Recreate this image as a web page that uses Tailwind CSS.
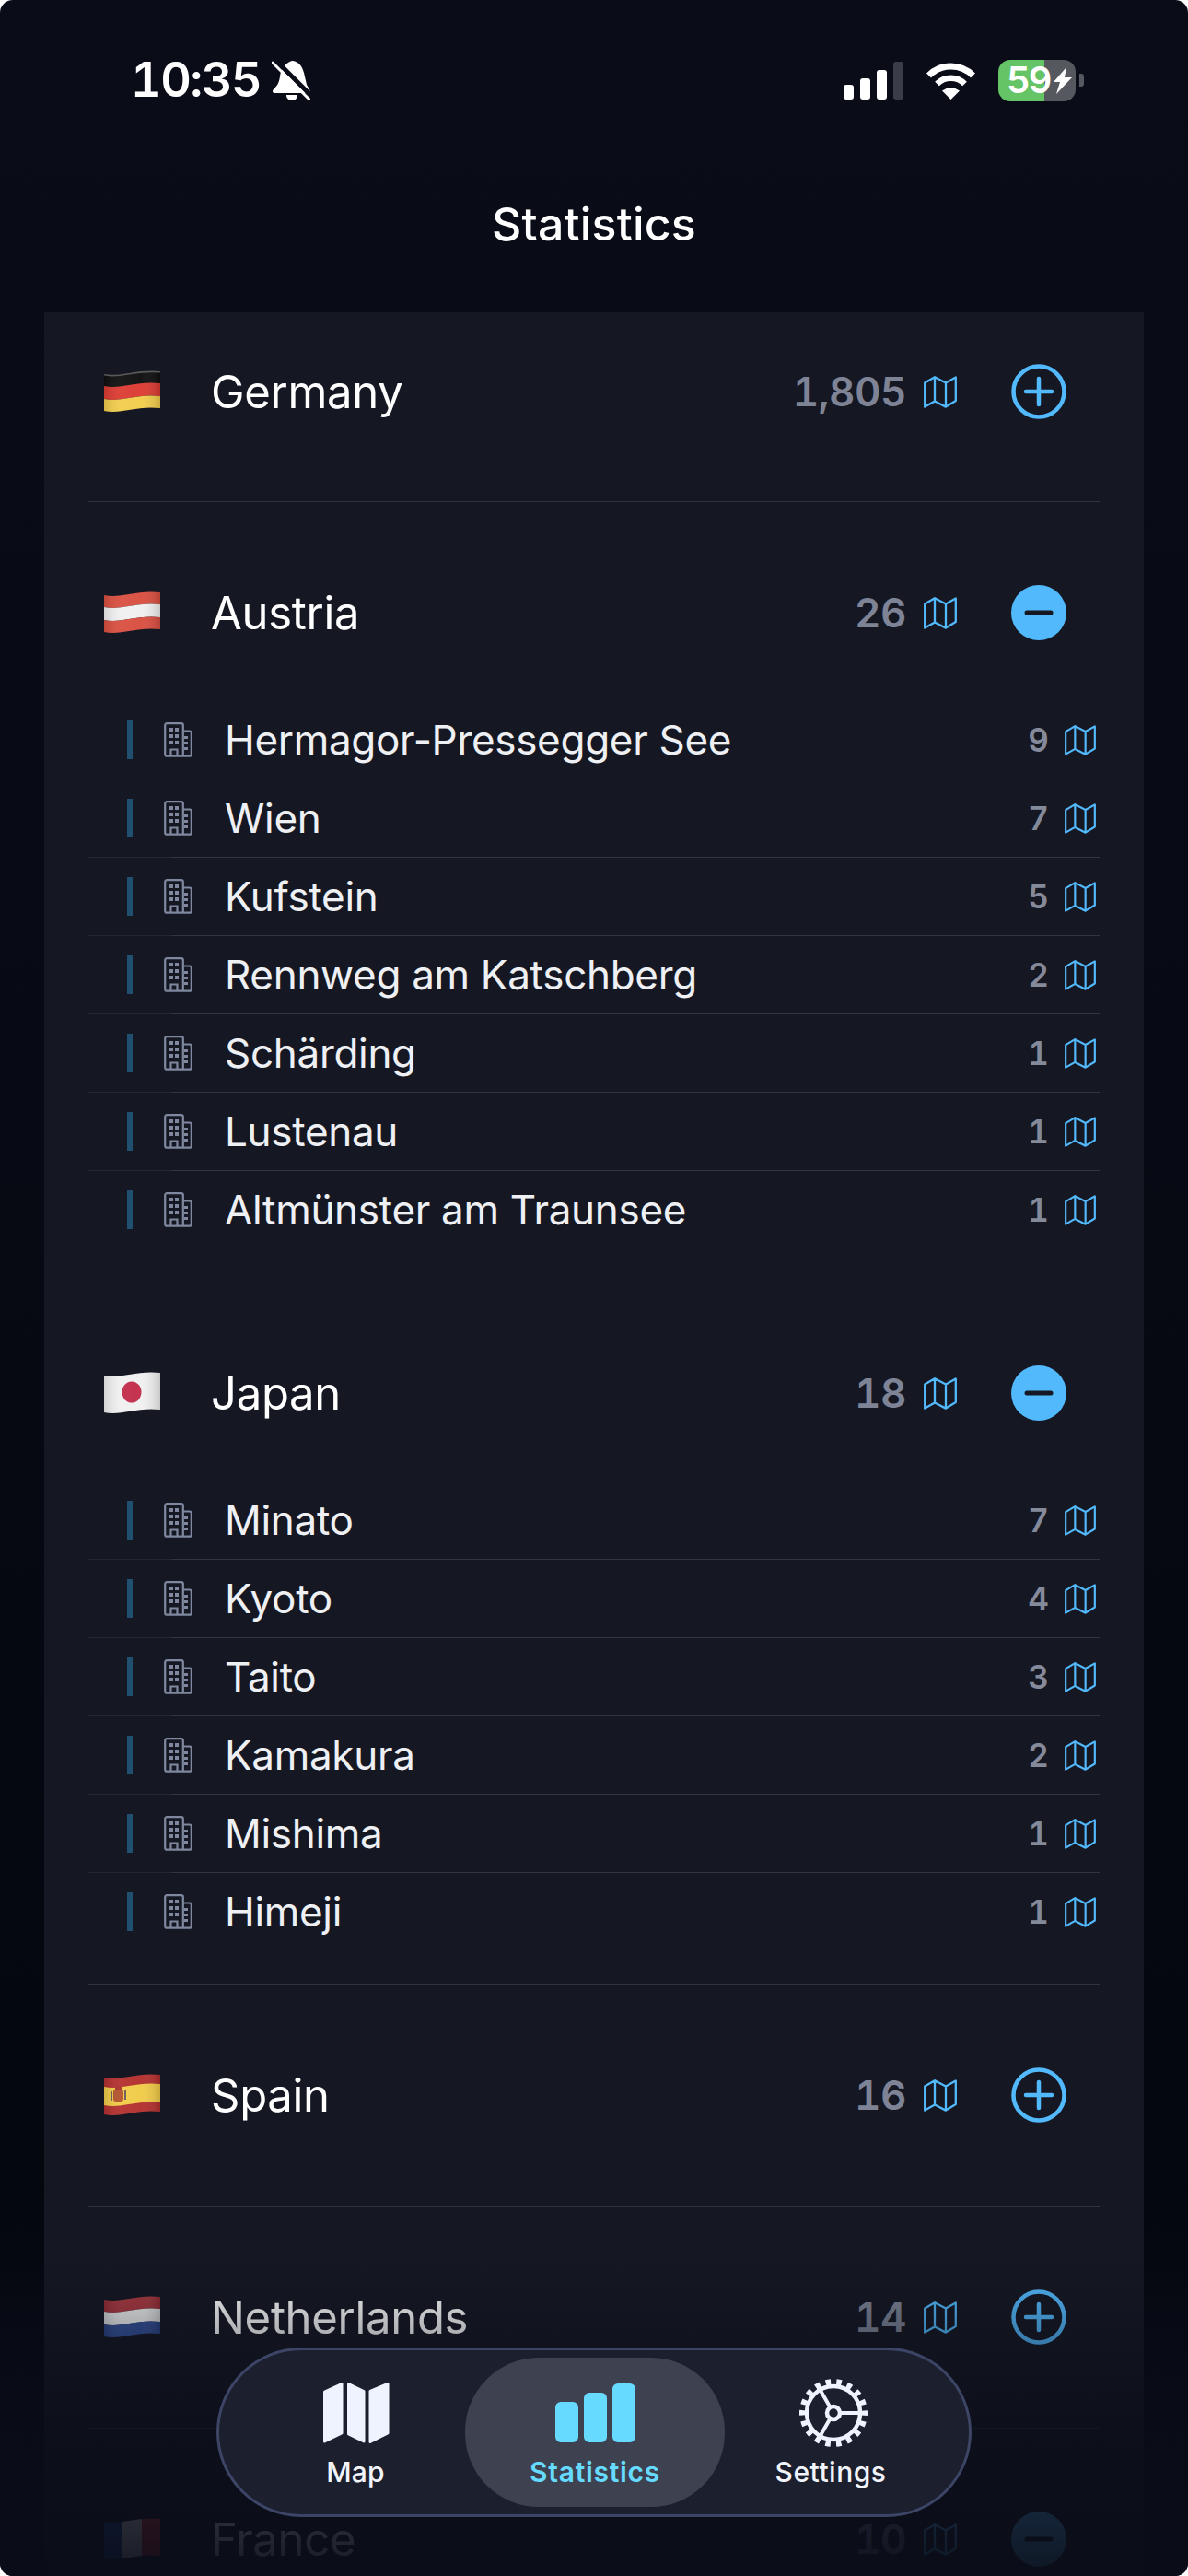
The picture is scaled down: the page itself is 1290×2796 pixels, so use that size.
<!DOCTYPE html>
<html lang="en">
<head>
  <meta charset="UTF-8" />
  <meta name="viewport" content="width=device-width, initial-scale=1" />
  <title>Statistics</title>
  <script src="https://cdn.jsdelivr.net/npm/@tailwindcss/browser@4"></script>
</head>
<body class="bg-white font-[family-name:Inter,sans-serif] text-white">
  <!-- Shared icons and flag shapes -->
  <svg class="absolute w-0 h-0" aria-hidden="true">
    <defs>
      <linearGradient id="flag-shade" x1="0" y1="0" x2="1" y2="0">
        <stop offset="0" stop-color="#000" stop-opacity="0.12" />
        <stop offset="0.3" stop-color="#fff" stop-opacity="0.05" />
        <stop offset="0.65" stop-color="#fff" stop-opacity="0.03" />
        <stop offset="1" stop-color="#000" stop-opacity="0.16" />
      </linearGradient>
      <clipPath id="flag-clip"><path d="M0 4C18 8 35-2 61 1V41C35 38 18 48 0 44Z" /></clipPath>
      <path id="flag-shape" d="M0 4C18 8 35-2 61 1V41C35 38 18 48 0 44Z" />
      <path id="band-top" d="M0 4C18 8 35-2 61 1V14C35 11 18 21 0 17Z" />
      <path id="band-mid" d="M0 17C18 21 35 11 61 14V28C35 25 18 35 0 31Z" />
      <path id="band-bot" d="M0 31C18 35 35 25 61 28V41C35 38 18 48 0 44Z" />
      <symbol id="map" viewBox="0 0 36 35">
        <path d="M1.2 7.5 12 1.2 24 7.5 34.8 1.5V27L24 33.6 12 27.5 1.2 33.6ZM12 1.2V27.5M24 7.5V33.6" fill="none" stroke="currentColor" stroke-width="2.3" stroke-linejoin="round" />
      </symbol>
      <symbol id="building" viewBox="0 0 31 38">
        <path d="M3.2 36.7H20.8V3.2A2 2 0 0 0 18.8 1.2H3.2A2 2 0 0 0 1.2 3.2V34.7A2 2 0 0 0 3.2 36.7ZM20.8 9.5H27.8A2 2 0 0 1 29.8 11.5V34.7A2 2 0 0 1 27.8 36.7H20.8M7.5 36.7V29.5H14.5V36.7" fill="none" stroke="currentColor" stroke-width="2.2" />
        <path d="M6 6h4v4H6zM12 6h4v4h-4zM6 13h4v4H6zM12 13h4v4h-4zM6 20h4v4H6zM12 20h4v4h-4zM22 15h4v3h-4zM22 21h4v3h-4zM22 27h4v3h-4z" fill="currentColor" />
      </symbol>
    </defs>
  </svg>

  <div class="relative w-[1290px] h-[2796px] overflow-hidden rounded-[14px] bg-linear-to-b from-[#0a0d18] via-[#05070f] via-[85%] to-[#0a0d18]">
    <!-- Status bar -->
    <div class="flex items-center justify-between h-[54px] mt-[60px] pl-[142px] pr-[113px]">
      <div class="flex items-center gap-[12px]">
        <span class="text-[52px] leading-none font-semibold tabular-nums tracking-[-1.5px]">10:35</span>
        <svg width="42" height="44" viewBox="0 0 42 44">
          <path d="M22 1C28 1 33 6 35 14L38 27 41 32C42 34 41 36 38 36H4C1 36 0 34 2 32 6 28 8 25 9 18 10 10 15 3 22 1Z" fill="#fff" />
          <path d="M16 38H28C28 42 25 44 22 44 19 44 16 42 16 38Z" fill="#fff" />
          <path d="M4 0 44 40" stroke="#0a0d18" stroke-width="5" />
          <path d="M1 3 41 43" stroke="#fff" stroke-width="3" stroke-linecap="round" />
        </svg>
      </div>
      <div class="flex items-center">
        <div class="flex items-end gap-[7px] h-[41px]">
          <div class="w-[11px] h-[16px] rounded-[3px] bg-white"></div>
          <div class="w-[11px] h-[23px] rounded-[3px] bg-white"></div>
          <div class="w-[11px] h-[32px] rounded-[3px] bg-white"></div>
          <div class="w-[11px] h-[41px] rounded-[3px] bg-[#3a3d48]"></div>
        </div>
        <svg class="ml-[23px]" width="57" height="42" viewBox="0 0 57 42">
          <path d="M4.5 16A34 34 0 0 1 52.500 16" fill="none" stroke="#fff" stroke-width="7" />
          <path d="M13.500 25A21 21 0 0 1 43.500 25" fill="none" stroke="#fff" stroke-width="6.500" />
          <path d="M28.500 42 19 32.500Q28.500 25.500 38 32.500Z" fill="#fff" />
        </svg>
        <div class="flex items-center justify-between ml-[23px] w-[84px] h-[45px] pl-[9px] pr-[4px] rounded-[13px] bg-[linear-gradient(90deg,#65c466_50px,#55585f_50px)]">
          <span class="text-[40px] leading-none font-semibold tracking-[-1.5px]">59</span>
          <svg width="20" height="29" viewBox="0 0 20 29"><path d="M14 0 0 16H7L3 29 20 11H12Z" fill="#fff" /></svg>
        </div>
        <div class="ml-[4px] w-[5px] h-[14px] rounded-r-[3px] bg-[#55585f]"></div>
      </div>
    </div>

    <!-- Title -->
    <h1 class="mt-[99px] mb-[66px] h-[60px] leading-[60px] text-center text-[50px] font-medium tracking-[0.2px]">Statistics</h1>

    <!-- List -->
    <div class="ml-[48px] w-[1194px] px-[48px] bg-[#151823]">
      <!-- Germany -->
      <section class="pt-[56px] pb-[89px] border-b border-[#30333f]">
        <div class="flex items-center h-[60px]">
          <svg class="ml-[17px] shrink-0" width="61" height="46" viewBox="0 0 61 46">
            <use href="#band-top" fill="#0f0f0f" /><use href="#band-mid" fill="#dc3b32" /><use href="#band-bot" fill="#f2cd4c" /><use href="#flag-shape" fill="url(#flag-shade)" />
            <path d="M0 4.800C18 8.800 35-1.200 61 1.800" fill="none" stroke="#5a5a5a" stroke-width="1.600" />
          </svg>
          <span class="ml-[55px] pt-[2px] flex-1 text-[49px] tracking-[-0.3px]">Germany</span>
          <span class="text-[44px] font-semibold tabular-nums tracking-[-0.5px] text-[#7e8496]">1,805</span>
          <svg class="ml-[19px] w-[36px] h-[35px] text-[#53b9fd]"><use href="#map" /></svg>
          <svg class="ml-[59px] mr-[36px]" width="60" height="60" viewBox="0 0 60 60"><circle cx="30" cy="30" r="27.500" fill="none" stroke="#53b9fd" stroke-width="4.500" /><path d="M30 16V44M16 30H44" stroke="#53b9fd" stroke-width="4.500" stroke-linecap="round" /></svg>
        </div>
      </section>

      <!-- Austria -->
      <section class="pt-[90px] pb-[35px] border-b border-[#30333f]">
        <div class="flex items-center h-[60px]">
          <svg class="ml-[17px] shrink-0" width="61" height="46" viewBox="0 0 61 46">
            <use href="#band-top" fill="#d94f40" /><use href="#band-mid" fill="#f0f0f0" /><use href="#band-bot" fill="#d94f40" /><use href="#flag-shape" fill="url(#flag-shade)" />
          </svg>
          <span class="ml-[55px] pt-[2px] flex-1 text-[49px] tracking-[-0.3px]">Austria</span>
          <span class="text-[44px] font-semibold tabular-nums tracking-[-0.5px] text-[#7e8496]">26</span>
          <svg class="ml-[19px] w-[36px] h-[35px] text-[#53b9fd]"><use href="#map" /></svg>
          <svg class="ml-[59px] mr-[36px]" width="60" height="60" viewBox="0 0 60 60"><circle cx="30" cy="30" r="30" fill="#53b9fd" /><path d="M17 30H43" stroke="#151823" stroke-width="5" stroke-linecap="round" /></svg>
        </div>
        <div class="mt-[66px]">
          <div class="flex items-center h-[85px] pb-[1px] bg-[linear-gradient(90deg,#23262f_90px,#32353f_90px)] bg-[length:100%_1px] bg-bottom bg-no-repeat">
            <div class="ml-[42px] w-[6px] h-[42px] bg-[#20506f]"></div>
            <svg class="ml-[34px] w-[31px] h-[38px] text-[#7f889f]"><use href="#building" /></svg>
            <span class="ml-[35px] flex-1 text-[44px] text-[#eef0f4] tracking-[-0.3px]">Hermagor-Pressegger See</span>
            <span class="text-[35px] font-semibold tabular-nums text-[#858a9b]">9</span>
            <svg class="ml-[17px] mr-[4px] w-[34px] h-[33px] text-[#53b9fd]"><use href="#map" /></svg>
          </div>
          <div class="flex items-center h-[85px] pb-[1px] bg-[linear-gradient(90deg,#23262f_90px,#32353f_90px)] bg-[length:100%_1px] bg-bottom bg-no-repeat">
            <div class="ml-[42px] w-[6px] h-[42px] bg-[#20506f]"></div>
            <svg class="ml-[34px] w-[31px] h-[38px] text-[#7f889f]"><use href="#building" /></svg>
            <span class="ml-[35px] flex-1 text-[44px] text-[#eef0f4] tracking-[-0.3px]">Wien</span>
            <span class="text-[35px] font-semibold tabular-nums text-[#858a9b]">7</span>
            <svg class="ml-[17px] mr-[4px] w-[34px] h-[33px] text-[#53b9fd]"><use href="#map" /></svg>
          </div>
          <div class="flex items-center h-[85px] pb-[1px] bg-[linear-gradient(90deg,#23262f_90px,#32353f_90px)] bg-[length:100%_1px] bg-bottom bg-no-repeat">
            <div class="ml-[42px] w-[6px] h-[42px] bg-[#20506f]"></div>
            <svg class="ml-[34px] w-[31px] h-[38px] text-[#7f889f]"><use href="#building" /></svg>
            <span class="ml-[35px] flex-1 text-[44px] text-[#eef0f4] tracking-[-0.3px]">Kufstein</span>
            <span class="text-[35px] font-semibold tabular-nums text-[#858a9b]">5</span>
            <svg class="ml-[17px] mr-[4px] w-[34px] h-[33px] text-[#53b9fd]"><use href="#map" /></svg>
          </div>
          <div class="flex items-center h-[85px] pb-[1px] bg-[linear-gradient(90deg,#23262f_90px,#32353f_90px)] bg-[length:100%_1px] bg-bottom bg-no-repeat">
            <div class="ml-[42px] w-[6px] h-[42px] bg-[#20506f]"></div>
            <svg class="ml-[34px] w-[31px] h-[38px] text-[#7f889f]"><use href="#building" /></svg>
            <span class="ml-[35px] flex-1 text-[44px] text-[#eef0f4] tracking-[-0.3px]">Rennweg am Katschberg</span>
            <span class="text-[35px] font-semibold tabular-nums text-[#858a9b]">2</span>
            <svg class="ml-[17px] mr-[4px] w-[34px] h-[33px] text-[#53b9fd]"><use href="#map" /></svg>
          </div>
          <div class="flex items-center h-[85px] pb-[1px] bg-[linear-gradient(90deg,#23262f_90px,#32353f_90px)] bg-[length:100%_1px] bg-bottom bg-no-repeat">
            <div class="ml-[42px] w-[6px] h-[42px] bg-[#20506f]"></div>
            <svg class="ml-[34px] w-[31px] h-[38px] text-[#7f889f]"><use href="#building" /></svg>
            <span class="ml-[35px] flex-1 text-[44px] text-[#eef0f4] tracking-[-0.3px]">Schärding</span>
            <span class="text-[35px] font-semibold tabular-nums text-[#858a9b]">1</span>
            <svg class="ml-[17px] mr-[4px] w-[34px] h-[33px] text-[#53b9fd]"><use href="#map" /></svg>
          </div>
          <div class="flex items-center h-[85px] pb-[1px] bg-[linear-gradient(90deg,#23262f_90px,#32353f_90px)] bg-[length:100%_1px] bg-bottom bg-no-repeat">
            <div class="ml-[42px] w-[6px] h-[42px] bg-[#20506f]"></div>
            <svg class="ml-[34px] w-[31px] h-[38px] text-[#7f889f]"><use href="#building" /></svg>
            <span class="ml-[35px] flex-1 text-[44px] text-[#eef0f4] tracking-[-0.3px]">Lustenau</span>
            <span class="text-[35px] font-semibold tabular-nums text-[#858a9b]">1</span>
            <svg class="ml-[17px] mr-[4px] w-[34px] h-[33px] text-[#53b9fd]"><use href="#map" /></svg>
          </div>
          <div class="flex items-center h-[85px] pb-[1px]">
            <div class="ml-[42px] w-[6px] h-[42px] bg-[#20506f]"></div>
            <svg class="ml-[34px] w-[31px] h-[38px] text-[#7f889f]"><use href="#building" /></svg>
            <span class="ml-[35px] flex-1 text-[44px] text-[#eef0f4] tracking-[-0.3px]">Altmünster am Traunsee</span>
            <span class="text-[35px] font-semibold tabular-nums text-[#858a9b]">1</span>
            <svg class="ml-[17px] mr-[4px] w-[34px] h-[33px] text-[#53b9fd]"><use href="#map" /></svg>
          </div>
        </div>
      </section>

      <!-- Japan -->
      <section class="pt-[90px] pb-[35px] border-b border-[#30333f]">
        <div class="flex items-center h-[60px]">
          <svg class="ml-[17px] shrink-0" width="61" height="46" viewBox="0 0 61 46">
            <use href="#flag-shape" fill="#f0f0f0" /><ellipse cx="30" cy="22" rx="10.500" ry="11.500" fill="#c22d4b" /><use href="#flag-shape" fill="url(#flag-shade)" />
          </svg>
          <span class="ml-[55px] pt-[2px] flex-1 text-[49px] tracking-[-0.3px]">Japan</span>
          <span class="text-[44px] font-semibold tabular-nums tracking-[-0.5px] text-[#7e8496]">18</span>
          <svg class="ml-[19px] w-[36px] h-[35px] text-[#53b9fd]"><use href="#map" /></svg>
          <svg class="ml-[59px] mr-[36px]" width="60" height="60" viewBox="0 0 60 60"><circle cx="30" cy="30" r="30" fill="#53b9fd" /><path d="M17 30H43" stroke="#151823" stroke-width="5" stroke-linecap="round" /></svg>
        </div>
        <div class="mt-[66px]">
          <div class="flex items-center h-[85px] pb-[1px] bg-[linear-gradient(90deg,#23262f_90px,#32353f_90px)] bg-[length:100%_1px] bg-bottom bg-no-repeat">
            <div class="ml-[42px] w-[6px] h-[42px] bg-[#20506f]"></div>
            <svg class="ml-[34px] w-[31px] h-[38px] text-[#7f889f]"><use href="#building" /></svg>
            <span class="ml-[35px] flex-1 text-[44px] text-[#eef0f4] tracking-[-0.3px]">Minato</span>
            <span class="text-[35px] font-semibold tabular-nums text-[#858a9b]">7</span>
            <svg class="ml-[17px] mr-[4px] w-[34px] h-[33px] text-[#53b9fd]"><use href="#map" /></svg>
          </div>
          <div class="flex items-center h-[85px] pb-[1px] bg-[linear-gradient(90deg,#23262f_90px,#32353f_90px)] bg-[length:100%_1px] bg-bottom bg-no-repeat">
            <div class="ml-[42px] w-[6px] h-[42px] bg-[#20506f]"></div>
            <svg class="ml-[34px] w-[31px] h-[38px] text-[#7f889f]"><use href="#building" /></svg>
            <span class="ml-[35px] flex-1 text-[44px] text-[#eef0f4] tracking-[-0.3px]">Kyoto</span>
            <span class="text-[35px] font-semibold tabular-nums text-[#858a9b]">4</span>
            <svg class="ml-[17px] mr-[4px] w-[34px] h-[33px] text-[#53b9fd]"><use href="#map" /></svg>
          </div>
          <div class="flex items-center h-[85px] pb-[1px] bg-[linear-gradient(90deg,#23262f_90px,#32353f_90px)] bg-[length:100%_1px] bg-bottom bg-no-repeat">
            <div class="ml-[42px] w-[6px] h-[42px] bg-[#20506f]"></div>
            <svg class="ml-[34px] w-[31px] h-[38px] text-[#7f889f]"><use href="#building" /></svg>
            <span class="ml-[35px] flex-1 text-[44px] text-[#eef0f4] tracking-[-0.3px]">Taito</span>
            <span class="text-[35px] font-semibold tabular-nums text-[#858a9b]">3</span>
            <svg class="ml-[17px] mr-[4px] w-[34px] h-[33px] text-[#53b9fd]"><use href="#map" /></svg>
          </div>
          <div class="flex items-center h-[85px] pb-[1px] bg-[linear-gradient(90deg,#23262f_90px,#32353f_90px)] bg-[length:100%_1px] bg-bottom bg-no-repeat">
            <div class="ml-[42px] w-[6px] h-[42px] bg-[#20506f]"></div>
            <svg class="ml-[34px] w-[31px] h-[38px] text-[#7f889f]"><use href="#building" /></svg>
            <span class="ml-[35px] flex-1 text-[44px] text-[#eef0f4] tracking-[-0.3px]">Kamakura</span>
            <span class="text-[35px] font-semibold tabular-nums text-[#858a9b]">2</span>
            <svg class="ml-[17px] mr-[4px] w-[34px] h-[33px] text-[#53b9fd]"><use href="#map" /></svg>
          </div>
          <div class="flex items-center h-[85px] pb-[1px] bg-[linear-gradient(90deg,#23262f_90px,#32353f_90px)] bg-[length:100%_1px] bg-bottom bg-no-repeat">
            <div class="ml-[42px] w-[6px] h-[42px] bg-[#20506f]"></div>
            <svg class="ml-[34px] w-[31px] h-[38px] text-[#7f889f]"><use href="#building" /></svg>
            <span class="ml-[35px] flex-1 text-[44px] text-[#eef0f4] tracking-[-0.3px]">Mishima</span>
            <span class="text-[35px] font-semibold tabular-nums text-[#858a9b]">1</span>
            <svg class="ml-[17px] mr-[4px] w-[34px] h-[33px] text-[#53b9fd]"><use href="#map" /></svg>
          </div>
          <div class="flex items-center h-[85px] pb-[1px]">
            <div class="ml-[42px] w-[6px] h-[42px] bg-[#20506f]"></div>
            <svg class="ml-[34px] w-[31px] h-[38px] text-[#7f889f]"><use href="#building" /></svg>
            <span class="ml-[35px] flex-1 text-[44px] text-[#eef0f4] tracking-[-0.3px]">Himeji</span>
            <span class="text-[35px] font-semibold tabular-nums text-[#858a9b]">1</span>
            <svg class="ml-[17px] mr-[4px] w-[34px] h-[33px] text-[#53b9fd]"><use href="#map" /></svg>
          </div>
        </div>
      </section>

      <!-- Spain -->
      <section class="py-[90px] border-b border-[#30333f]">
        <div class="flex items-center h-[60px]">
          <svg class="ml-[17px] shrink-0" width="61" height="46" viewBox="0 0 61 46">
            <use href="#flag-shape" fill="#b3302f" />
            <path d="M0 14C18 18 35 8 61 11V31C35 28 18 38 0 34Z" fill="#f1cb48" />
            <rect x="10" y="17" width="11" height="13" rx="3" fill="#b4532c" />
            <rect x="12" y="14" width="7" height="4" fill="#a8322a" />
            <rect x="7" y="19" width="2" height="10" fill="#6d5a5a" />
            <rect x="22" y="18" width="2" height="10" fill="#6d5a5a" />
            <use href="#flag-shape" fill="url(#flag-shade)" />
          </svg>
          <span class="ml-[55px] pt-[2px] flex-1 text-[49px] tracking-[-0.3px]">Spain</span>
          <span class="text-[44px] font-semibold tabular-nums tracking-[-0.5px] text-[#7e8496]">16</span>
          <svg class="ml-[19px] w-[36px] h-[35px] text-[#53b9fd]"><use href="#map" /></svg>
          <svg class="ml-[59px] mr-[36px]" width="60" height="60" viewBox="0 0 60 60"><circle cx="30" cy="30" r="27.500" fill="none" stroke="#53b9fd" stroke-width="4.500" /><path d="M30 16V44M16 30H44" stroke="#53b9fd" stroke-width="4.500" stroke-linecap="round" /></svg>
        </div>
      </section>

      <!-- Netherlands -->
      <section class="py-[90px] border-b border-[#30333f]">
        <div class="flex items-center h-[60px]">
          <svg class="ml-[17px] shrink-0" width="61" height="46" viewBox="0 0 61 46">
            <use href="#band-top" fill="#a8323a" /><use href="#band-mid" fill="#f0f0f0" /><use href="#band-bot" fill="#2c4a96" /><use href="#flag-shape" fill="url(#flag-shade)" />
          </svg>
          <span class="ml-[55px] pt-[2px] flex-1 text-[49px] tracking-[-0.3px]">Netherlands</span>
          <span class="text-[44px] font-semibold tabular-nums tracking-[-0.5px] text-[#7e8496]">14</span>
          <svg class="ml-[19px] w-[36px] h-[35px] text-[#53b9fd]"><use href="#map" /></svg>
          <svg class="ml-[59px] mr-[36px]" width="60" height="60" viewBox="0 0 60 60"><circle cx="30" cy="30" r="27.500" fill="none" stroke="#53b9fd" stroke-width="4.500" /><path d="M30 16V44M16 30H44" stroke="#53b9fd" stroke-width="4.500" stroke-linecap="round" /></svg>
        </div>
      </section>

      <!-- France -->
      <section class="pt-[90px] pb-[60px]">
        <div class="flex items-center h-[60px]">
          <svg class="ml-[17px] shrink-0" width="61" height="46" viewBox="0 0 61 46">
            <g clip-path="url(#flag-clip)"><rect width="20" height="46" fill="#1d4a9c" /><rect x="20" width="21" height="46" fill="#f0f0f0" /><rect x="41" width="20" height="46" fill="#d8313c" /></g>
          </svg>
          <span class="ml-[55px] pt-[2px] flex-1 text-[49px] tracking-[-0.3px]">France</span>
          <span class="text-[44px] font-semibold tabular-nums tracking-[-0.5px] text-[#7e8496]">10</span>
          <svg class="ml-[19px] w-[36px] h-[35px] text-[#53b9fd]"><use href="#map" /></svg>
          <svg class="ml-[59px] mr-[36px]" width="60" height="60" viewBox="0 0 60 60"><circle cx="30" cy="30" r="30" fill="#53b9fd" /><path d="M17 30H43" stroke="#151823" stroke-width="5" stroke-linecap="round" /></svg>
        </div>
      </section>
    </div>

    <!-- Fade behind the tab bar -->
    <div class="absolute inset-x-0 bottom-0 h-[346px] bg-linear-to-b from-[#0a0d18]/0 via-[#0a0d18]/75 via-[55%] to-[#0a0d18]/95"></div>

    <!-- Tab bar -->
    <nav class="absolute left-[235px] top-[2548px] flex items-center w-[820px] h-[184px] pl-[29px] rounded-[92px] border-[3px] border-[#3c4566] bg-[#1c1f2d]">
      <div class="flex flex-col items-center w-[238px] h-[162px] pt-[28px]">
        <div class="flex items-center justify-center h-[64px] ml-[2px]">
          <svg width="72" height="66" viewBox="0 0 72 66">
            <g fill="#eff3ff" stroke="#eff3ff" stroke-width="3" stroke-linejoin="round">
              <path d="M1.500 10 20 1.500V55L1.500 64Z" />
              <path d="M27.500 1.500 44 9.500V64L27.500 56Z" />
              <path d="M51 9.500 70 1.500V55L51 64.500Z" />
            </g>
          </svg>
        </div>
        <span class="mt-[14px] text-[30px] leading-[36px] font-medium tracking-[0.2px] text-[#f2f4fb]">Map</span>
      </div>
      <div class="flex flex-col items-center w-[282px] h-[162px] pt-[28px] rounded-[80px] bg-[#3e4150]">
        <div class="flex items-end gap-[6px] h-[64px]">
          <div class="w-[25px] h-[44px] rounded-[6px] bg-[#66dbff]"></div>
          <div class="w-[25px] h-[54px] rounded-[6px] bg-[#66dbff]"></div>
          <div class="w-[25px] h-[64px] rounded-[6px] bg-[#66dbff]"></div>
        </div>
        <span class="mt-[14px] text-[30px] leading-[36px] font-semibold tracking-[0.7px] text-[#66dbff]">Statistics</span>
      </div>
      <div class="flex flex-col items-center w-[230px] h-[162px] pt-[28px]">
        <div class="flex items-center justify-center h-[64px] ml-[5px]">
          <svg class="shrink-0" width="74" height="74" viewBox="0 0 74 74">
            <g fill="none" stroke="#eff3ff">
              <circle cx="37" cy="37" r="33.500" stroke-width="7" stroke-dasharray="5.500 6.190" stroke-dashoffset="2.750" />
              <circle cx="37" cy="37" r="29" stroke-width="4.500" />
              <circle cx="37" cy="37" r="7" stroke-width="4.500" />
              <path d="M44 37H66M33.500 31 22 11M33.500 43 22 63" stroke-width="4" />
            </g>
          </svg>
        </div>
        <span class="mt-[14px] text-[30px] leading-[36px] font-medium tracking-[0.5px] text-[#f2f4fb]">Settings</span>
      </div>
    </nav>
  </div>
</body>
</html>
